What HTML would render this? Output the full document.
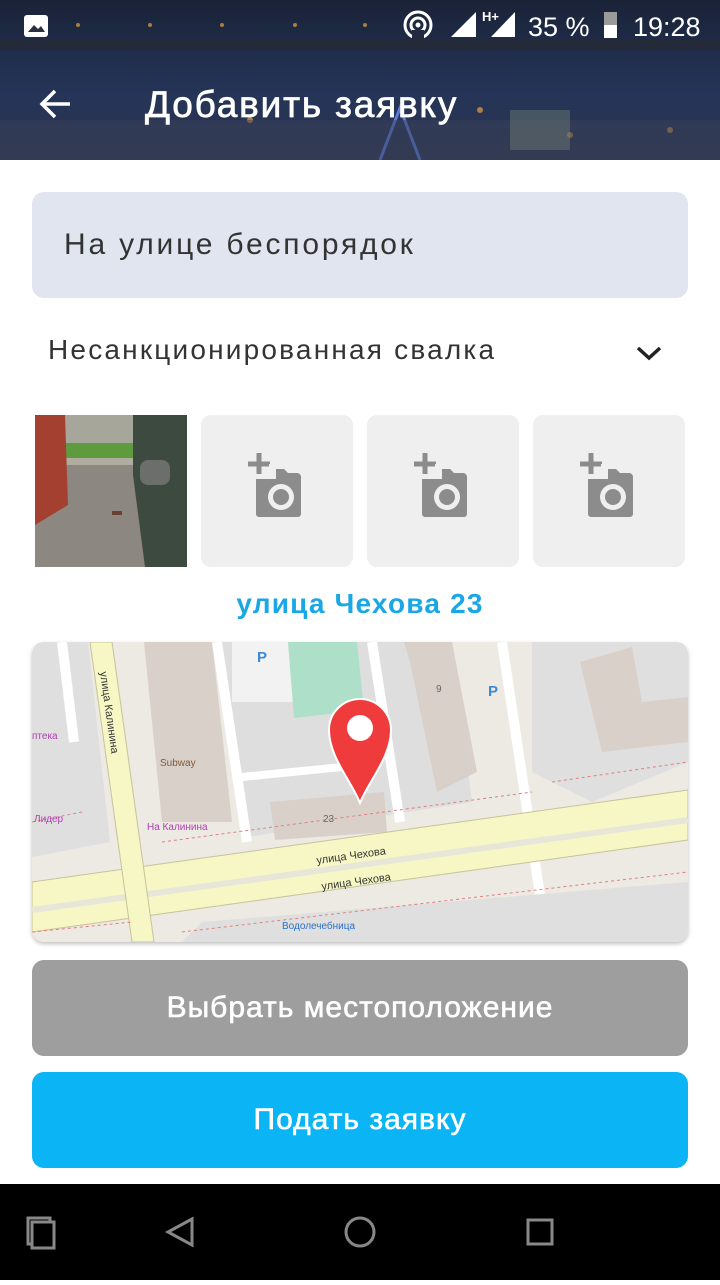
<!DOCTYPE html>
<html><head><meta charset="utf-8"><style>
*{margin:0;padding:0;box-sizing:border-box}
body{width:720px;height:1280px;position:relative;background:#fff;font-family:"Liberation Sans",sans-serif;overflow:hidden}
.hdr{position:absolute;left:0;top:0;width:720px;height:160px;background:linear-gradient(180deg,#1a2236 0%,#1f2c4a 30%,#253457 60%,#2b3550 100%)}
.abs{position:absolute}
.tile{position:absolute;top:415px;width:152px;height:152px;background:#efefef;border-radius:10px}
.btn{position:absolute;left:32px;width:656px;height:96px;border-radius:12px;color:#fff;font-size:30px;text-align:center;line-height:96px;letter-spacing:1px;-webkit-text-stroke:0.6px #fff}
</style></head><body>
<div class="hdr">
 <svg class="abs" style="left:0;top:0" width="720" height="160">
  <rect x="0" y="40" width="720" height="10" fill="#2a2a30" opacity=".6"/>
  <g fill="#e8a040" opacity=".7"><circle cx="78" cy="25" r="2"/><circle cx="150" cy="25" r="2"/><circle cx="222" cy="25" r="2"/><circle cx="295" cy="25" r="2"/><circle cx="365" cy="25" r="2"/><circle cx="480" cy="110" r="3"/><circle cx="570" cy="135" r="3"/><circle cx="670" cy="130" r="3"/><circle cx="250" cy="120" r="3"/></g>
  <path d="M380 160 L400 108 L420 160" stroke="#5a7adf" stroke-width="3" fill="none"/>
  <rect x="0" y="120" width="720" height="40" fill="#3a4058" opacity=".5"/>
  <rect x="510" y="110" width="60" height="40" fill="#7a8a7a" opacity=".4"/>
  <rect x="24" y="15" width="24" height="22" rx="3" fill="#fff"/>
  <path d="M28 32 L34 25 L38 29 L41 26 L45 32Z" fill="#2a2f40"/>
  <circle cx="418" cy="25" r="13" fill="none" stroke="#fff" stroke-width="3"/><circle cx="418" cy="25" r="7" fill="none" stroke="#fff" stroke-width="3"/><circle cx="418" cy="25" r="2.5" fill="#fff"/>
  <rect x="412" y="30" width="12" height="10" fill="#222a40"/>
  <path d="M451 37 L476 12 L476 37Z" fill="#fff"/><path d="M491 37 L515 12 L515 37Z" fill="#fff"/>
  <text x="482" y="21" fill="#fff" font-size="13" font-weight="bold">H+</text>
  <text x="528" y="36" fill="#fff" font-size="27">35 %</text>
  <rect x="604" y="12" width="13" height="26" fill="#9a9a9a"/><rect x="604" y="25" width="13" height="13" fill="#fff"/>
  <text x="633" y="36" fill="#fff" font-size="27">19:28</text>
  <path d="M70 104 H42 M55 91 L42 104 L55 117" stroke="#fff" stroke-width="3.5" fill="none"/>
  <text x="145" y="117" fill="#fff" font-size="37" letter-spacing="1.8" stroke="#fff" stroke-width="0.7">Добавить заявку</text>
 </svg>
</div>
<div class="abs" style="left:32px;top:192px;width:656px;height:106px;background:#e1e5ef;border-radius:12px;font-size:30px;color:#333;padding-left:32px;line-height:106px;letter-spacing:2.8px">На улице беспорядок</div>
<div class="abs" style="left:48px;top:334px;font-size:28px;color:#333;letter-spacing:2.2px">Несанкционированная свалка</div>
<svg class="abs" style="left:636px;top:345px" width="26" height="16"><path d="M2 3 L13 13 L24 3" stroke="#222" stroke-width="3.5" fill="none"/></svg>
<svg class="abs" style="left:35px;top:415px" width="152" height="152">
 <rect width="152" height="152" fill="#8c8780"/>
 <rect x="30" y="0" width="70" height="28" fill="#a7a69a"/>
 <rect x="30" y="28" width="70" height="15" fill="#5e9a3e"/>
 <rect x="30" y="43" width="70" height="7" fill="#b0aca0"/>
 <path d="M0 0 L30 0 L33 90 L0 110Z" fill="#a44030"/>
 <path d="M98 0 L152 0 L152 152 L110 152 L98 60Z" fill="#3d4a40"/>
 <rect x="105" y="45" width="30" height="25" rx="8" fill="#6b6e6b"/>
 <rect x="77" y="96" width="10" height="4" fill="#6a4030"/>
</svg>
<div class="tile" style="left:201px"></div><div class="tile" style="left:367px"></div><div class="tile" style="left:533px"></div>
<svg class="abs" style="left:0;top:0" width="720" height="600">
 <defs><g id="cam"><path d="M0 10 H20 V0 H28 l4 4 H41 a4 4 0 0 1 4 4 V45 a3 3 0 0 1 -3 3 H3 a3 3 0 0 1 -3 -3Z" fill="#8c8c8c"/><circle cx="25" cy="28" r="13" fill="#efefef"/><circle cx="25" cy="28" r="8" fill="#8c8c8c"/><path d="M-8 -5 H14 M3 -16 V6" stroke="#8c8c8c" stroke-width="5"/><path d="M-1 6 H14 V-5" stroke="#efefef" stroke-width="2" fill="none"/></g></defs>
 <use href="#cam" x="256" y="469"/><use href="#cam" x="422" y="469"/><use href="#cam" x="588" y="469"/>
</svg>
<div class="abs" style="left:0;top:588px;width:720px;text-align:center;font-size:28px;font-weight:bold;color:#1aa7e6;letter-spacing:1.2px">улица Чехова 23</div>
<div class="abs" style="left:32px;top:642px;width:656px;height:300px;border-radius:12px;overflow:hidden;box-shadow:0 2px 4px rgba(0,0,0,.25)">
<svg width="656" height="300" font-family="Liberation Sans,sans-serif">
 <rect width="656" height="300" fill="#ede9e3"/>
 <path d="M20 0 H56 L78 200 L0 215 V0Z" fill="#e0dfdf"/>
 <path d="M112 0 H180 L200 180 H130Z" fill="#d9d0c9"/>
 <path d="M190 0 H420 L440 160 L215 195Z" fill="#dedede"/>
 <rect x="200" y="0" width="70" height="60" fill="#f2f2f2"/>
 <path d="M256 0 H325 L332 68 L262 76Z" fill="#aedfc8"/>
 <path d="M372 0 H420 L445 130 L405 150 L378 20Z" fill="#d9d0c9"/>
 <path d="M238 160 L352 150 L355 190 L243 198Z" fill="#d9d0c9"/>
 <path d="M500 0 H656 V120 L560 160 L500 130Z" fill="#e0dfdf"/>
 <path d="M548 20 L600 5 L610 60 L656 55 V100 L570 110Z" fill="#d9d0c9"/>
 <path d="M185 0 L215 200 M340 0 L368 180 M470 0 L515 300 M30 0 L42 100" stroke="#fff" stroke-width="10" fill="none"/>
 <path d="M210 135 L310 125" stroke="#fff" stroke-width="8"/>
 <path d="M170 280 L656 240 V300 H150Z" fill="#e0dfdf"/>
 <path d="M0 240 L656 148 L656 198 L0 290Z" fill="#f6f7c4" stroke="#c8c29a" stroke-width="1"/>
 <path d="M0 268 L656 178" stroke="#e8e6d8" stroke-width="6"/>
 <path d="M58 0 L80 0 L122 300 L100 300Z" fill="#f6f7c4" stroke="#c8c29a"/>
 <g fill="none" stroke="#e08080" stroke-dasharray="3 3" stroke-width="1"><path d="M0 180 L50 170 M130 200 L500 150 M520 140 L656 120 M150 290 L656 230 M0 290 L100 280"/></g>
 <text x="225" y="20" font-size="15" fill="#3a8ad8" font-weight="bold">P</text>
 <text x="456" y="54" font-size="15" fill="#3a8ad8" font-weight="bold">P</text>
 <text x="404" y="50" font-size="10" fill="#666">9</text>
 <text x="291" y="180" font-size="10" fill="#666">23</text>
 <text x="128" y="124" font-size="10" fill="#7a5a3a">Subway</text>
 <text x="115" y="188" font-size="10" fill="#b040b0">На Калинина</text>
 <text x="0" y="97" font-size="10" fill="#b040b0">птека</text>
 <text x="2" y="180" font-size="10" fill="#b040b0">Лидер</text>
 <text x="250" y="287" font-size="10" fill="#2a70c8">Водолечебница</text>
 <text transform="translate(285 222) rotate(-8)" font-size="11" fill="#333">улица Чехова</text>
 <text transform="translate(290 248) rotate(-8)" font-size="11" fill="#333">улица Чехова</text>
 <text transform="translate(68 30) rotate(82)" font-size="11" fill="#333">улица Калинина</text>
 <path d="M328 161 C320 140 297 115 297 88 A31 31 0 0 1 359 88 C359 115 336 140 328 161Z" fill="#ef3b3b" stroke="#fff" stroke-width="2"/>
 <circle cx="328" cy="86" r="13" fill="#fff"/>
</svg></div>
<div class="btn" style="top:960px;background:#9e9e9e">Выбрать местоположение</div>
<div class="btn" style="top:1072px;background:#0ab4f5">Подать заявку</div>
<div class="abs" style="left:0;top:1184px;width:720px;height:96px;background:#000">
 <svg width="720" height="96">
  <rect x="28" y="34" width="22" height="26" fill="none" stroke="#888" stroke-width="3"/><rect x="32" y="38" width="22" height="26" fill="#000" stroke="#888" stroke-width="3"/>
  <path d="M192 35 L168 48 L192 61Z" fill="none" stroke="#888" stroke-width="3"/>
  <circle cx="360" cy="48" r="14" fill="none" stroke="#888" stroke-width="3"/>
  <rect x="528" y="36" width="24" height="24" fill="none" stroke="#888" stroke-width="3"/>
 </svg>
</div>
</body></html>
